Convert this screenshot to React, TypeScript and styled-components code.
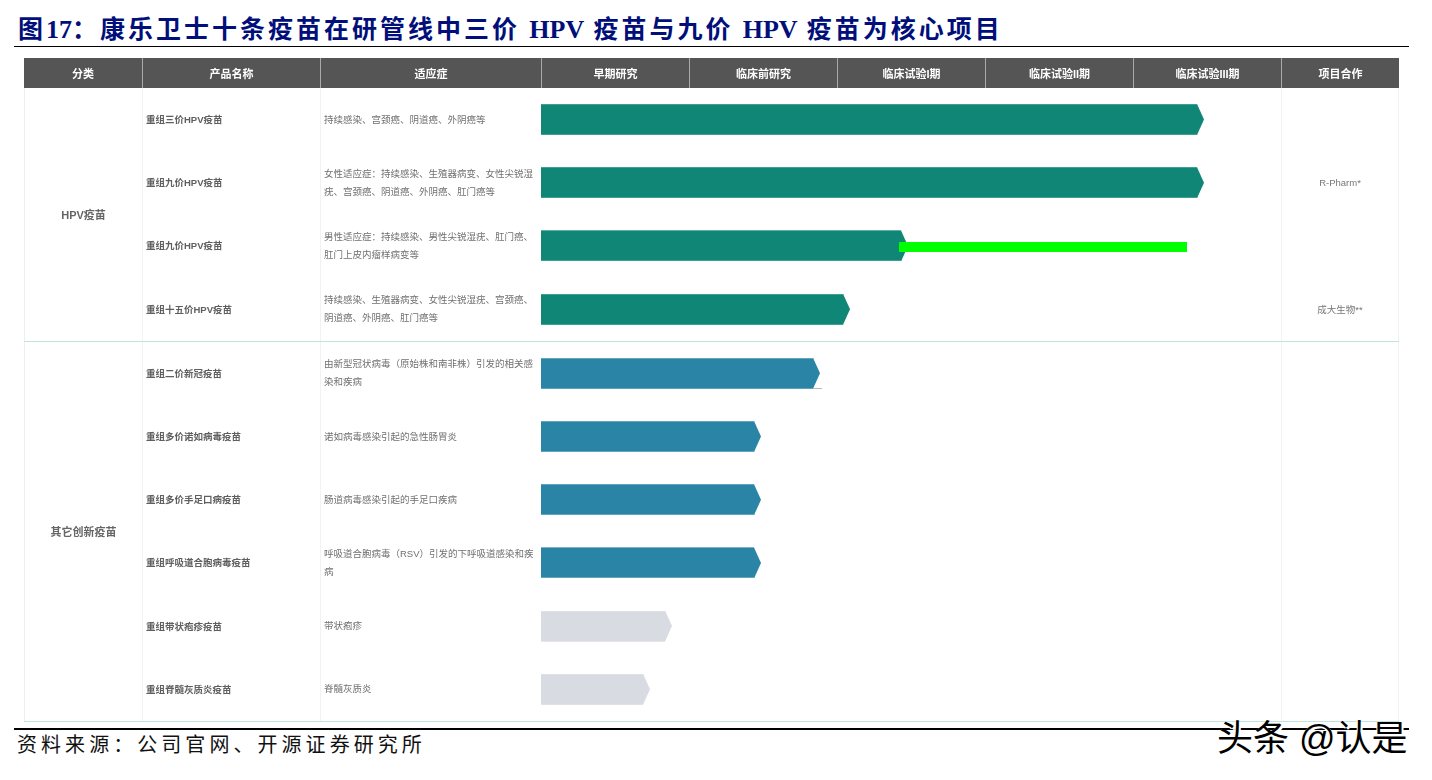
import React from "react";
import styled, { createGlobalStyle } from "styled-components";

const SANS = '"Liberation Sans", "Noto Sans CJK SC", sans-serif';
const SERIF = '"Liberation Serif", "Noto Sans CJK SC", serif';

const COLORS = {
  teal: { fill: "#0f8676", edge: "#3f9f93" },
  blue: { fill: "#2a84a6", edge: "#62a5bd" },
  grey: { fill: "#d8dbe2", edge: "#dfe1e7" },
};

type Tone = keyof typeof COLORS;

type Item = {
  name: string;
  use: string;
  bar: number;
  tone: Tone;
  partner?: string;
  overlay?: boolean;
  tick?: boolean;
};

const hpv: Item[] = [
  { name: "重组三价HPV疫苗", use: "持续感染、宫颈癌、阴道癌、外阴癌等", bar: 663, tone: "teal" },
  {
    name: "重组九价HPV疫苗",
    use: "女性适应症：持续感染、生殖器病变、女性尖锐湿疣、宫颈癌、阴道癌、外阴癌、肛门癌等",
    bar: 663,
    tone: "teal",
    partner: "R-Pharm*",
  },
  {
    name: "重组九价HPV疫苗",
    use: "男性适应症：持续感染、男性尖锐湿疣、肛门癌、肛门上皮内瘤样病变等",
    bar: 367,
    tone: "teal",
    overlay: true,
  },
  {
    name: "重组十五价HPV疫苗",
    use: "持续感染、生殖器病变、女性尖锐湿疣、宫颈癌、阴道癌、外阴癌、肛门癌等",
    bar: 309,
    tone: "teal",
    partner: "成大生物**",
  },
];

const others: Item[] = [
  { name: "重组二价新冠疫苗", use: "由新型冠状病毒（原始株和南非株）引发的相关感染和疾病", bar: 279, tone: "blue", tick: true },
  { name: "重组多价诺如病毒疫苗", use: "诺如病毒感染引起的急性肠胃炎", bar: 220, tone: "blue" },
  { name: "重组多价手足口病疫苗", use: "肠道病毒感染引起的手足口疾病", bar: 220, tone: "blue" },
  { name: "重组呼吸道合胞病毒疫苗", use: "呼吸道合胞病毒（RSV）引发的下呼吸道感染和疾病", bar: 220, tone: "blue" },
  { name: "重组带状疱疹疫苗", use: "带状疱疹", bar: 131, tone: "grey" },
  { name: "重组脊髓灰质炎疫苗", use: "脊髓灰质炎", bar: 109, tone: "grey" },
];

const heads = ["分类", "产品名称", "适应症", "早期研究", "临床前研究", "临床试验I期", "临床试验II期", "临床试验III期", "项目合作"];

const GlobalStyle = createGlobalStyle`
  html, body {
    margin: 0;
    background: #fff;
  }
`;

const Page = styled.div`
  position: relative;
  width: 1432px;
  height: 780px;
  overflow: hidden;
  background: #fff;
`;

const Title = styled.div`
  box-sizing: border-box;
  width: 1395px;
  height: 47px;
  margin-left: 14px;
  padding: 15px 0 0 4px;
  border-bottom: 1.5px solid #000;
  font-family: ${SERIF};
  font-size: 25px;
  line-height: 30px;
  font-weight: 700;
  letter-spacing: 3px;
  color: #000f7a;
  white-space: nowrap;
`;

const Latin = styled.span`
  font-size: 26px;
  letter-spacing: 0;
`;

const Table = styled.div`
  width: 1375px;
  margin: 11px 0 0 24px;
  font-family: ${SANS};
  filter: blur(0.4px);
`;

const Head = styled.div`
  display: grid;
  grid-template-columns: 118px 178px 221px repeat(5, 148px) 118px;
  height: 30px;
  background: #555;
`;

const HeadCell = styled.div`
  display: flex;
  align-items: center;
  justify-content: center;
  border-left: 1px solid #a9a9a9;
  color: #fff;
  font-size: 11px;
  font-weight: 700;

  &:first-child {
    border-left: none;
  }
`;

const GroupWrap = styled.div`
  display: grid;
  grid-template-columns: 118px 1fr;
  border-bottom: 1px solid #bfe3df;
`;

const Category = styled.div`
  display: flex;
  align-items: center;
  justify-content: center;
  padding-bottom: 1px;
  border-left: 1px solid #eef0f0;
  color: #666;
  font-size: 11px;
  font-weight: 700;
`;

const Row = styled.div`
  display: grid;
  grid-template-columns: 178px 221px 740px 118px;
  height: 63.2px;
`;

const Product = styled.div`
  display: flex;
  align-items: center;
  padding: 0 0 1px 3px;
  border-left: 1px solid #f1f2f2;
  color: #5f5f5f;
  font-size: 9.5px;
  font-weight: 700;
`;

const Indication = styled.div`
  display: flex;
  align-items: center;
  padding: 0 4px 0 3px;
  border-left: 1px solid #f1f2f2;
  color: #707070;
  font-size: 9.5px;
  line-height: 18px;
`;

const Stage = styled.div`
  position: relative;
  display: flex;
  align-items: center;
`;

const Bar = styled.div<{ $tone: Tone }>`
  box-sizing: border-box;
  height: 31px;
  background: ${(p) => COLORS[p.$tone].fill};
  border-top: 1px solid ${(p) => COLORS[p.$tone].edge};
  border-bottom: 1px solid ${(p) => COLORS[p.$tone].edge};
  clip-path: polygon(0 0, calc(100% - 7px) 0, 100% 50%, calc(100% - 7px) 100%, 0 100%);
`;

const Tick = styled.div`
  position: absolute;
  left: 272px;
  top: 46.5px;
  width: 9px;
  height: 1px;
  background: #a9bcc2;
`;

const Overlay = styled.div`
  position: absolute;
  left: 358px;
  top: 27.5px;
  width: 288px;
  height: 10px;
  background: #00ff00;
`;

const Partner = styled.div`
  display: flex;
  align-items: center;
  justify-content: center;
  border-left: 1px solid #f1f2f2;
  border-right: 1px solid #f1f2f2;
  color: #777;
  font-size: 9.5px;
`;

const Source = styled.div`
  box-sizing: border-box;
  width: 1395px;
  height: 30px;
  margin: 6px 0 0 14px;
  padding-left: 3px;
  border-top: 2px solid #000;
  font-family: ${SERIF};
  font-size: 20px;
  line-height: 30px;
  letter-spacing: 4.05px;
  color: #111;
  white-space: nowrap;
`;

const Watermark = styled.div`
  position: absolute;
  left: 1217px;
  top: 719px;
  font-family: ${SANS};
  font-size: 36px;
  line-height: 40px;
  color: #000;
  white-space: nowrap;
  text-shadow: 2px 2px 0 #fff, -1px 1px 0 #fff;
`;

const Group = ({ label, items }: { label: string; items: Item[] }) => (
  <GroupWrap>
    <Category>{label}</Category>
    <div>
      {items.map((item, i) => (
        <Row key={i}>
          <Product>{item.name}</Product>
          <Indication>{item.use}</Indication>
          <Stage>
            <Bar $tone={item.tone} style={{ width: item.bar }} />
            {item.tick && <Tick />}
            {item.overlay && <Overlay />}
          </Stage>
          <Partner>{item.partner}</Partner>
        </Row>
      ))}
    </div>
  </GroupWrap>
);

const App = () => {
  return (
    <Page>
      <GlobalStyle />
      <Title>
        图<Latin>17</Latin>：康乐卫士十条疫苗在研管线中三价 <Latin>HPV</Latin> 疫苗与九价 <Latin>HPV</Latin> 疫苗为核心项目
      </Title>
      <Table>
        <Head>
          {heads.map((h) => (
            <HeadCell key={h}>{h}</HeadCell>
          ))}
        </Head>
        <Group label="HPV疫苗" items={hpv} />
        <Group label="其它创新疫苗" items={others} />
      </Table>
      <Source>资料来源：公司官网、开源证券研究所</Source>
      <Watermark>头条 @认是</Watermark>
    </Page>
  );
};

export default App;
